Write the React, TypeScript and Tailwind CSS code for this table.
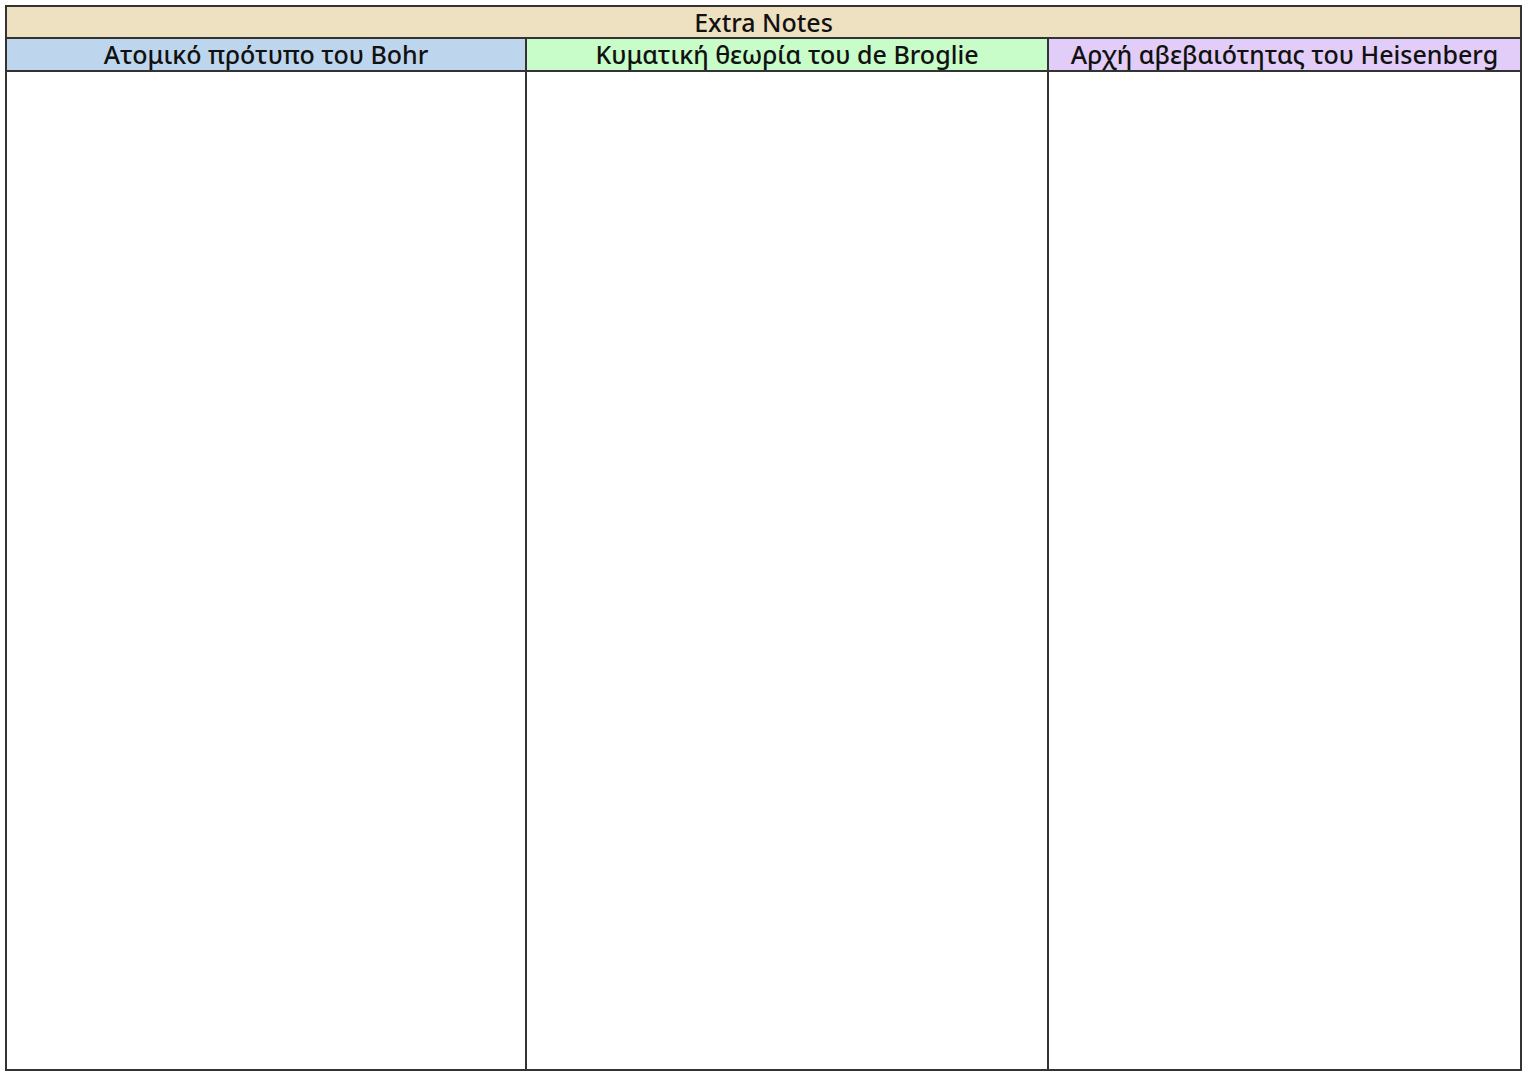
import React from "react";

export default function App() {
  const font = { fontFamily: '"Noto Sans", "Open Sans", sans-serif' };
  return (
    <div className="w-[1527px] h-[1080px] bg-white pt-[5px] pl-[5px]" style={font}>
      <div className="w-[1517px] h-[1066px] border-2 border-[#333] flex flex-col">
        <div className="h-[32px] bg-[#ede1c2] border-b-2 border-[#333] flex items-center justify-center text-[25px] font-medium text-[#111] leading-none">
          Extra Notes
        </div>
        <div className="h-[33px] grid grid-cols-[520px_522px_1fr] border-b-2 border-[#333] text-[25px] font-medium text-[#111] leading-none">
          <div className="bg-[#bed6ed] border-r-2 border-[#333] flex items-center justify-center">Ατομικό πρότυπο του Bohr</div>
          <div className="bg-[#c8fcc8] border-r-2 border-[#333] flex items-center justify-center">Κυματική θεωρία του de Broglie</div>
          <div className="bg-[#e1cdf8] flex items-center justify-center">Αρχή αβεβαιότητας του Heisenberg</div>
        </div>
        <div className="flex-1 grid grid-cols-[520px_522px_1fr]">
          <div className="border-r-2 border-[#333]" />
          <div className="border-r-2 border-[#333]" />
          <div />
        </div>
      </div>
    </div>
  );
}
